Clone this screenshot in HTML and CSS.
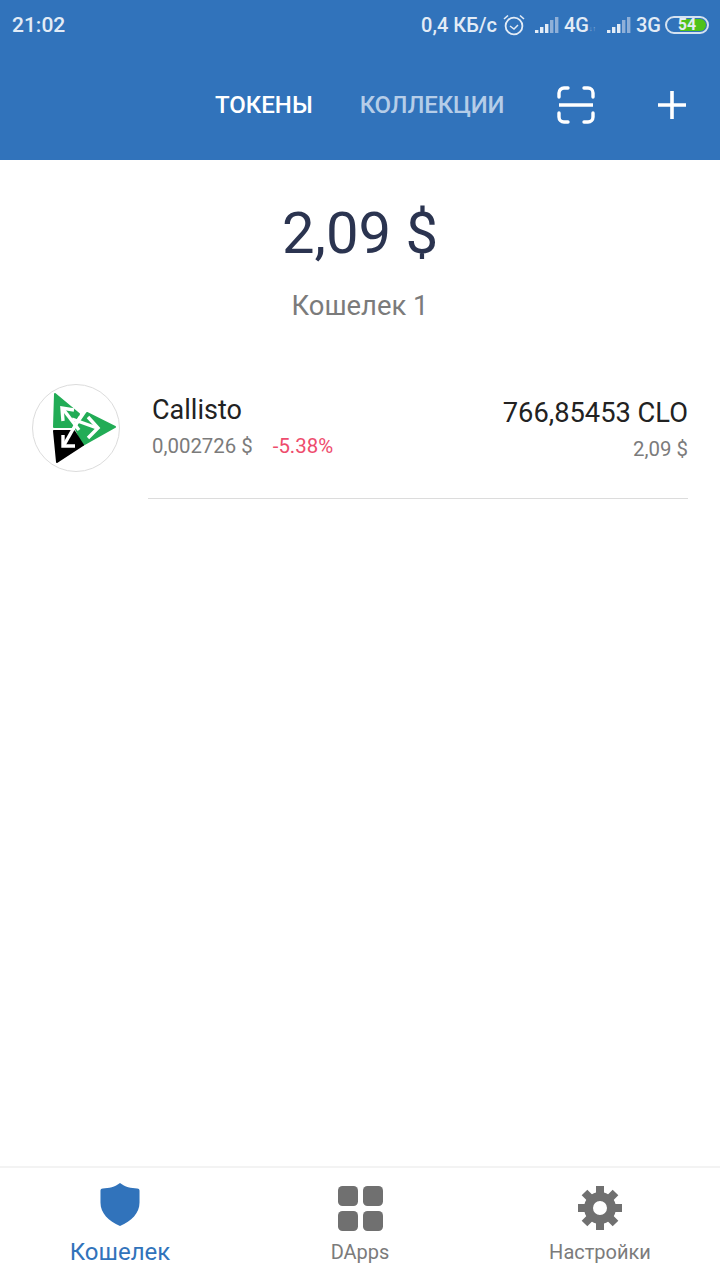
FILE: index.html
```html
<!DOCTYPE html>
<html lang="ru">
<head>
  <meta charset="UTF-8">
  <meta name="viewport" content="width=device-width, initial-scale=1.0">
  <link rel="stylesheet" href="styles.css">
  <title>Кошелек</title>
</head>
<body>
  <div id="wrapper">
    <header>
      <div class="statusBar">
        <span class="clock">21:02</span>
        <div class="statusRight">
          <span class="speed">0,4 КБ/с</span>
          <svg class="alarm" width="24" height="24" viewBox="0 0 24 24" fill="none" stroke="#e3ecf6" stroke-width="1.8">
            <circle cx="12" cy="13" r="8.4"/>
            <path d="M8 13l4 3 4-4" stroke-width="1.5"/>
            <path d="M2 6l4-3.5M22 6l-4-3.5" stroke-width="1.6"/>
          </svg>
          <svg class="signal" width="26" height="18" viewBox="0 0 26 18">
            <rect x="0" y="14" width="3.4" height="3" fill="#e3ecf6"/>
            <rect x="5" y="11" width="3.4" height="6" fill="#e3ecf6"/>
            <rect x="10" y="8" width="3.4" height="9" fill="#e3ecf6"/>
            <rect x="15" y="4" width="3.4" height="13" fill="#8fb0d8"/>
            <rect x="20" y="1" width="3.4" height="16" fill="#8fb0d8"/>
          </svg>
          <span class="net">4G</span>
          <span class="arrows">↓↑</span>
          <svg class="signal" width="26" height="18" viewBox="0 0 26 18">
            <rect x="0" y="14" width="3.4" height="3" fill="#e3ecf6"/>
            <rect x="5" y="11" width="3.4" height="6" fill="#e3ecf6"/>
            <rect x="10" y="8" width="3.4" height="9" fill="#e3ecf6"/>
            <rect x="15" y="4" width="3.4" height="13" fill="#8fb0d8"/>
            <rect x="20" y="1" width="3.4" height="16" fill="#8fb0d8"/>
          </svg>
          <span class="net">3G</span>
          <div class="battery"><div class="batteryFill"></div><span class="batteryText">54</span></div>
        </div>
      </div>
      <nav class="topBar">
        <span class="tab active">ТОКЕНЫ</span>
        <span class="tab other">КОЛЛЕКЦИИ</span>
        <svg class="scan" width="38" height="38" viewBox="0 0 38 38" fill="none" stroke="#fff" stroke-width="3.4" stroke-linecap="round">
          <path d="M2 11V7a5 5 0 0 1 5-5h4M27 2h4a5 5 0 0 1 5 5v4M2 27v4a5 5 0 0 0 5 5h4M27 36h4a5 5 0 0 0 5-5v-4"/>
          <path d="M2 19h34" stroke-linecap="butt"/>
        </svg>
        <svg class="plus" width="30" height="30" viewBox="0 0 30 30" stroke="#fff" stroke-width="3.6">
          <path d="M15 1v28M1 15h28"/>
        </svg>
      </nav>
    </header>

    <main>
      <div class="total">2,09 $</div>
      <div class="walletName">Кошелек 1</div>

      <div class="token">
        <div class="tokenLogo">
          <svg width="88" height="88" viewBox="0 0 88 88">
            <path d="M23 10 L47 30 L40 43 L22 43 Z" fill="#22ac56" stroke="#22ac56" stroke-width="2" stroke-linejoin="round"/>
            <path d="M55 29 L83 43 L51 61 L44 45 Z" fill="#22ac56" stroke="#22ac56" stroke-width="2" stroke-linejoin="round"/>
            <path d="M22 47 L42 47 L51 61 L25 78 Z" fill="#000" stroke="#000" stroke-width="2" stroke-linejoin="round"/>
            <g fill="none" stroke="#fff" stroke-width="3.4">
              <path d="M31 25 L47 46"/>
              <path d="M31 37 L30 24 L42 26"/>
              <path d="M40 35 L65 44"/>
              <path d="M56 33 L66 44 L56 54"/>
              <path d="M48 33 L32 61"/>
              <path d="M31 51 L31 62 L43 62"/>
            </g>
          </svg>
        </div>
        <div class="tokenInfo">
          <div class="tokenName">Callisto</div>
          <div class="tokenPrice"><span>0,002726 $</span><span class="change">-5.38%</span></div>
        </div>
        <div class="tokenAmount">
          <div class="amount">766,85453 CLO</div>
          <div class="amountUsd">2,09 $</div>
        </div>
      </div>
      <div class="divider"></div>
    </main>

    <footer>
      <div class="navItem current">
        <svg width="40" height="43" viewBox="0 0 42 44" preserveAspectRatio="none">
          <path d="M21 0 C26 4 33 5.500 39 5.500 C41 5.500 41.500 6.500 41.500 8 L41.500 20 C41.500 31 33 39 21 44 C9 39 .5 31 .5 20 L.5 8 C.5 6.500 1 5.500 3 5.500 C9 5.500 16 4 21 0 Z" fill="#3173bb"/>
        </svg>
        <span>Кошелек</span>
      </div>
      <div class="navItem apps">
        <svg width="46" height="46" viewBox="0 0 46 46" fill="#707070">
          <rect x="0" y="0" width="20" height="20" rx="4.500"/>
          <rect x="25" y="0" width="20" height="20" rx="4.500"/>
          <rect x="0" y="25" width="20" height="20" rx="4.500"/>
          <rect x="25" y="25" width="20" height="20" rx="4.500"/>
        </svg>
        <span>DApps</span>
      </div>
      <div class="navItem">
        <svg width="46" height="46" viewBox="0 0 46 46">
          <circle cx="23" cy="23" r="11.500" fill="none" stroke="#707070" stroke-width="9"/>
          <g stroke="#707070" stroke-width="8">
            <path d="M23 1v8M23 37v8M1 23h8M37 23h8"/>
            <path d="M7.500 7.500l6 6M32.500 32.500l6 6M7.500 38.500l6-6M32.500 13.500l6-6"/>
          </g>
        </svg>
        <span>Настройки</span>
      </div>
    </footer>
  </div>
</body>
</html>
```

FILE: styles.css
```css
*{box-sizing: border-box;}
body{
  margin: 0;
  background-color: #fff;
  font-family: Roboto, "Liberation Sans", sans-serif;
}
#wrapper
{
  display: flex;
  flex-direction: column;
  width: 720px;
  height: 1280px;
  overflow: hidden;
}
header
{
  height: 160px;
  flex: none;
  color: #fff;
  background-color: #3173bb;
}
.statusBar
{
  display: flex;
  justify-content: space-between;
  align-items: center;
  height: 50px;
  padding: 0 11px 0 12px;
  font-size: 20px;
  font-weight: 500;
  color: #e3ecf6;
}
.clock
{
  font-size: 21px;
}
.statusRight
{
  display: flex;
  align-items: center;
}
.alarm
{
  margin-left: 5px;
}
.signal
{
  margin-left: 9px;
}
.net
{
  margin-left: 3px;
}
.arrows
{
  width: 9px;
  font-size: 7px;
  color: #8fb0d8;
  margin-top: 8px;
  white-space: nowrap;
  overflow: hidden;
}
.battery
{
  position: relative;
  width: 44px;
  height: 18px;
  margin-left: 4px;
  border: 2px solid #d5e2f0;
  border-radius: 9px;
  overflow: hidden;
}
.batteryFill
{
  position: absolute;
  top: 1px;
  bottom: 1px;
  left: 13px;
  right: 1px;
  border-radius: 0 7px 7px 0;
  background-color: #4fc21a;
}
.batteryText
{
  position: absolute;
  top: 0;
  left: 0;
  width: 100%;
  text-align: center;
  font-size: 16px;
  line-height: 14px;
  font-weight: 700;
}
.topBar
{
  display: flex;
  align-items: center;
  height: 110px;
  padding-left: 215px;
}
.tab
{
  font-size: 24px;
  font-weight: 500;
  color: #b5cde8;
}
.tab.active
{
  color: #fff;
  margin-right: 47px;
}
.tab.other
{
  letter-spacing: -.2px;
}
.scan
{
  margin-left: 53px;
}
.plus
{
  margin-left: 62px;
}
main
{
  flex: 1;
  display: flex;
  flex-direction: column;
  align-items: center;
}
.total
{
  margin-top: 38px;
  font-size: 58px;
  line-height: 70px;
  color: #2b3450;
}
.walletName
{
  margin-top: 23px;
  font-size: 27.4px;
  line-height: 30px;
  color: #7b7b7b;
}
.token
{
  display: flex;
  align-items: center;
  width: 100%;
  margin-top: 63px;
  padding: 0 32px;
}
.tokenLogo
{
  width: 88px;
  height: 88px;
  flex: none;
  border: 1px solid #dcdcdc;
  border-radius: 50%;
}
.tokenLogo svg
{
  display: block;
  margin: -1px;
}
.tokenInfo
{
  flex: 1;
  margin-left: 32px;
  margin-bottom: 3px;
}
.tokenName
{
  font-size: 27px;
  line-height: 30px;
  color: #222;
}
.tokenPrice
{
  display: flex;
  gap: 20px;
  margin-top: 8px;
  font-size: 20.400px;
  line-height: 26px;
  color: #7b7b7b;
}
.change
{
  color: #ee4c6d;
}
.tokenAmount
{
  margin-top: 4px;
}
.amount
{
  font-size: 27.300px;
  line-height: 30px;
  text-align: right;
  color: #222;
}
.amountUsd
{
  margin-top: 8px;
  font-size: 20.400px;
  line-height: 26px;
  text-align: right;
  color: #7b7b7b;
}
.divider
{
  align-self: flex-end;
  width: 540px;
  height: 1px;
  margin-top: 26px;
  margin-right: 32px;
  background-color: #dcdcdc;
}
footer
{
  display: grid;
  grid-template-columns: 240px 240px 240px;
  height: 114px;
  flex: none;
  padding-top: 16px;
  border-top: 2px solid #f3f3f3;
}
.navItem
{
  display: flex;
  flex-direction: column;
  align-items: center;
  font-size: 20px;
  line-height: 26px;
  color: #7b7b7b;
}
.navItem svg
{
  height: 46px;
  margin-top: 1px;
  margin-bottom: 8px;
}
.navItem.current
{
  font-size: 24px;
  color: #3173bb;
}
.navItem.current svg
{
  height: 43px;
  margin-top: -1px;
  margin-bottom: 13px;
}
.navItem.apps svg
{
  margin-left: 2px;
  margin-top: 2px;
  margin-bottom: 7px;
}
```
